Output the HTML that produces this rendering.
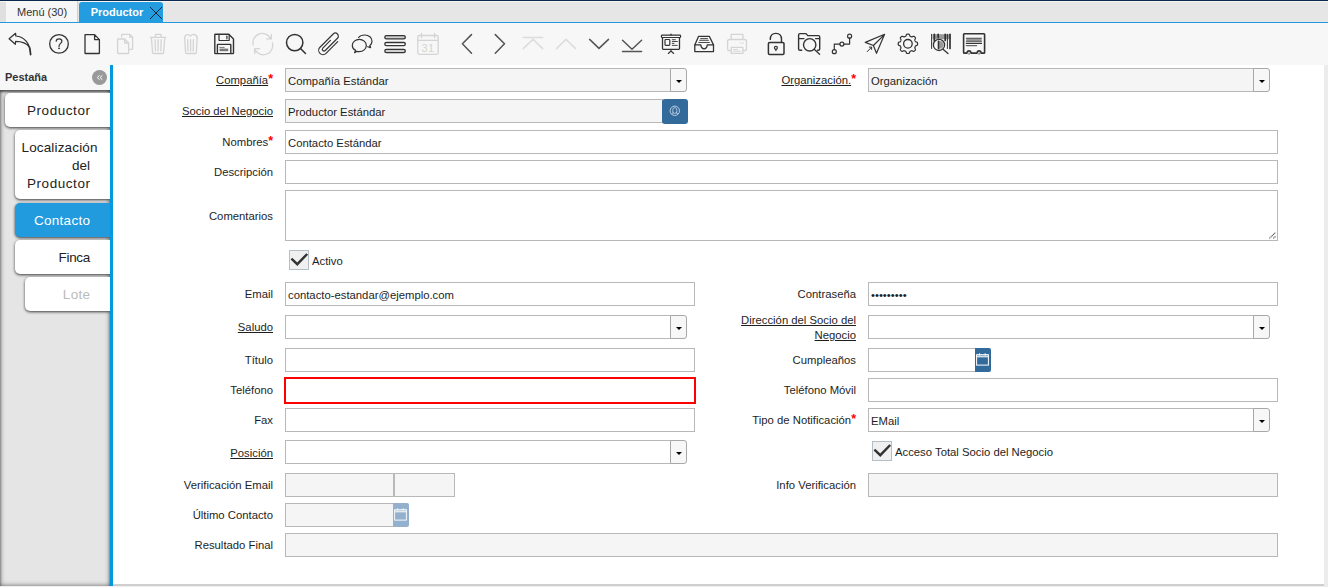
<!DOCTYPE html>
<html><head><meta charset="utf-8">
<style>
*{margin:0;padding:0;box-sizing:border-box}
html,body{width:1328px;height:587px;overflow:hidden;background:#f0f0f0;font-family:"Liberation Sans",sans-serif;color:#333}
.a{position:absolute}
#topline{left:0;top:0;width:1328px;height:1px;background:#0a2a4e}
#tabbar{left:0;top:1px;width:1328px;height:21px;background:#e6e6e6;border-top:1px solid #f4f4f4}
#menutab{left:6px;top:1px;width:72px;height:21px;background:#f6f6f6;border-right:1px solid #d0d0d0}
#menutab span{position:absolute;left:11px;top:5px;font-size:11px;color:#333;white-space:nowrap}
#prodtab{left:79px;top:2px;width:84px;height:20px;background:#249ce0;border-radius:3px 3px 0 0}
#prodtab span{position:absolute;left:11.7px;top:4px;font-size:11px;font-weight:bold;color:#fff;white-space:nowrap}
#blueline{left:0;top:22px;width:1328px;height:1px;background:#239ade}
#toolbar{left:0;top:23px;width:1328px;height:42px;background:#f7f7f7}
#lefthead{left:0;top:65px;width:110px;height:25px;background:#f7f7f7}
#lefthead span{position:absolute;left:5px;top:5.5px;font-size:11px;font-weight:bold;color:#333}
#collapse{left:92px;top:70px;width:15px;height:15px;border-radius:50%;background:#999}
#leftlist{left:0;top:90px;width:110px;height:496px;background:#e5e5e5;box-shadow:inset 0 2px 2px rgba(0,0,0,.45),inset 0 0 5px rgba(0,0,0,.6)}
#bluebar{left:110px;top:65px;width:3px;height:521px;background:#0399e0}
#content{left:113px;top:65px;width:1211px;height:519px;background:#fff}
#rightstrip{left:1324px;top:65px;width:4px;height:522px;background:#ececec}
#bottomline{left:113px;top:584px;width:1211px;height:2px;background:#cfcfcf}
.tab{position:absolute;left:15px;width:95px;height:34px;background:#fff;border-radius:5px 0 0 5px;box-shadow:0 1px 3px rgba(0,0,0,.75);font-size:13.5px;color:#222;text-align:right;padding-right:20px;line-height:36px;white-space:nowrap}
.lab{position:absolute;font-size:11.3px;color:#1e1e1e;text-align:right;white-space:nowrap;line-height:24px}
.ll{left:113px;width:160px}
.rl{left:696px;width:160px}
.u{text-decoration:underline}
.req{color:#f00;font-size:12.5px;position:relative;top:-1px;font-weight:bold}
.f{position:absolute;border:1px solid #b8b8b8;background:#fff;height:24px;font-size:11.3px;color:#1e1e1e;padding-left:2px;line-height:23px;white-space:nowrap}
.ro{background:#f5f5f5}
.dd{position:absolute;width:17px;height:24px;border:1px solid #a8a8a8;border-radius:0 3px 3px 0;background:#f7f7f7}
.dd:after{content:"";position:absolute;left:4.5px;top:10.5px;border-left:3px solid transparent;border-right:3px solid transparent;border-top:3.5px solid #000}
.cb{position:absolute;width:20px;height:20px;border:1px solid #b3bec6;background:#f0f0f0}
.cb svg{position:absolute;left:-1px;top:-1px}
.ic{position:absolute;top:23px;width:33px;height:42px}
.ic svg{position:absolute;left:0;top:0}
</style></head><body>
<div id="topline" class="a"></div>
<div id="tabbar" class="a"></div>
<div class="a" style="left:0;top:2px;width:6px;height:20px;background:#e0e0e0"></div>
<div id="menutab" class="a"><span>Menú (30)</span></div>
<div id="prodtab" class="a"><span>Productor</span>
<svg class="a" style="left:70px;top:4px" width="14" height="14" viewBox="0 0 14 14"><path d="M1 1L13 13M13 1L1 13" stroke="#0d1b2a" stroke-width="0.95" fill="none"/></svg></div>
<div id="blueline" class="a"></div>
<div id="toolbar" class="a"></div>
<svg class="a" style="left:0;top:0" width="1328" height="65" viewBox="0 0 1328 65" fill="none" stroke-linecap="round" stroke-linejoin="round">
<g stroke="#333" stroke-width="1.3">
<!-- undo -->
<path d="M30.6 54.6 C30.2 43 24 36.5 15.8 36 L15.6 33.3 L9.1 38.8 L15.3 44.3 L15.6 41.4 C21 41.4 26.5 43 29.4 47.2" stroke-width="1.25"/>
<path d="M29.4 47 C30.1 49.5 30.5 52 30.6 54.6" stroke-width="1.6"/>
<!-- help -->
<circle cx="59" cy="43.9" r="9.3"/>
<path d="M56.2 41.2 C56.2 39.6 57.4 38.9 59.1 38.9 C60.9 38.9 61.9 39.9 61.9 41.2 C61.9 43.2 59 43.8 59 46.4" stroke-width="1.2"/>
<circle cx="59" cy="48.3" r="0.6" fill="#333" stroke-width="0.6"/>
<!-- new -->
<path d="M85 34.6 H94.6 L99.4 39.6 V52.9 Q99.4 53.5 98.8 53.5 H85.6 Q85 53.5 85 52.9 V35.2 Q85 34.6 85.6 34.6 Z M94.6 34.6 V39.6 H99.4"/>
<!-- save -->
<path d="M214.8 34.8 Q214.8 34.2 215.4 34.2 H228.8 L233.5 38.9 V53 Q233.5 53.6 232.9 53.6 H215.4 Q214.8 53.6 214.8 53 Z" stroke-width="1.4"/>
<path d="M219 34.5 V39.9 Q219 40.5 219.6 40.5 H228.6 Q229.2 40.5 229.2 39.9 V34.5" stroke-width="1.2"/>
<path d="M226.9 36.2 V38.8" stroke-width="1.2"/>
<path d="M217.4 53.4 V44.9 Q217.4 44.4 217.9 44.4 H230.3 Q230.8 44.4 230.8 44.9 V53.4" stroke-width="1.4"/>
<path d="M219.8 47.4 H224.2" stroke="#666" stroke-width="0.9"/>
<rect x="219.6" y="48.6" width="8.6" height="2.6" fill="#777" stroke="none"/>
<!-- find -->
<circle cx="294.7" cy="42.6" r="8.2" stroke-width="1.5"/>
<path d="M300.5 48.5 L305.5 53.5" stroke-width="1.5"/>
<!-- attach -->
<path transform="translate(329.2 44.1) rotate(45) scale(0.86)" d="M5 -9 V10.2 A5 5 0 0 1 -5 10.2 V-11.6 A3.5 3.5 0 0 1 2 -11.6 V8.5 A2 2 0 0 1 -2 8.5 V-4" stroke-width="1.35"/>
<!-- chat -->
<path d="M355.6 50.4 C353.3 49.2 352.3 47.4 352.3 45.5 C352.3 42 355.5 39.4 359.3 39.4 C363.1 39.4 366.3 42 366.3 45.5 C366.3 49 363.1 51.6 359.3 51.6 C358.5 51.6 357.8 51.5 357.1 51.3 L354.6 52.6 Z" stroke-width="1.2"/>
<path d="M358.6 37.5 C359.8 35.9 362.2 35 364.8 35 C368.9 35 372 37.7 372 41.3 C372 43.2 371.2 44.7 369.8 45.8 L370.6 47.6 L367.7 46.7" stroke-width="1.2"/>
<!-- grid -->
<rect x="384.8" y="35.6" width="20.5" height="3.2" rx="1.6" fill="#d0d0d0"/>
<rect x="384.8" y="42.5" width="20.5" height="3.2" rx="1.6" fill="#fff"/>
<rect x="384.8" y="49.4" width="20.5" height="3.2" rx="1.6" fill="#d0d0d0"/>
<!-- chevrons -->
<path d="M471.5 34.6 L462.4 43.8 L471.5 53.2 M495.3 34.6 L504.5 43.8 L495.3 53.2" stroke="#555" stroke-width="1.5"/>
<path d="M589.6 39.4 L599 48.4 L608.5 39.4 M622.5 40.3 L632 49.3 L641.6 40.3 M622.5 51.6 H641.6" stroke="#555" stroke-width="1.5"/>
<!-- report -->
<rect x="661.4" y="35.1" width="19.2" height="2.4" rx="0.8" stroke-width="1.2"/>
<path d="M671 34.2 V35" stroke-width="1.4"/>
<path d="M662.5 37.6 V48.6 Q662.5 49.3 663.2 49.3 H678.8 Q679.5 49.3 679.5 48.6 V37.6" stroke-width="1.3"/>
<rect x="665" y="39.5" width="4.8" height="5.9" rx="0.8" stroke-width="1.2"/>
<path d="M672.3 39.7 H675.4 M672.3 41.5 H677.4 M672.3 43.4 H674 M672.3 45.4 H677.2" stroke-width="0.9"/>
<path d="M671 49.5 V51 L668.3 53.5 M671 51 L673.7 53.5" stroke-width="1.1"/>
<!-- archive -->
<path d="M694.8 44.9 L698.6 36.3 H709.3 L713.5 44.9" stroke-width="1.3"/>
<path d="M694.8 44.9 V51.6 H713.5 V44.9 H707.3 C707 47.3 705.5 48.8 704.1 48.8 C702.7 48.8 701.1 47.3 700.8 44.9 Z" stroke-width="1.3"/>
<path d="M700.6 38.6 H707.5 M699.6 40.3 H708.5 M698.8 42.5 H709.4" stroke-width="0.9"/>
<!-- lock -->
<path d="M770.3 39.4 C770.3 35.5 772.8 33.4 775.9 33.4 C779 33.4 781.5 35.5 781.5 39.4 V42.4" stroke-width="1.4"/>
<rect x="768.4" y="42.5" width="15.6" height="12" rx="1.2" stroke-width="1.5"/>
<circle cx="775.9" cy="47.8" r="1.5" stroke-width="1.2"/>
<path d="M775.9 49.3 V50.6" stroke-width="1.2"/>
<!-- zoom across -->
<path d="M801.7 50.3 H800 Q798.6 50.3 798.6 48.9 V35 Q798.6 33.6 800 33.6 H806 L807.8 35.6 H818.4 Q819.7 35.6 819.7 37 V48.9 Q819.7 50.3 818.4 50.3 H817.5" stroke-width="1.4"/>
<path d="M798.6 38.6 H804 M815.5 38.6 H819.7" stroke-width="1.2"/>
<circle cx="809.7" cy="44.8" r="6.2" stroke-width="1.4"/>
<path d="M814.2 49.3 L819.6 54.3" stroke-width="1.3"/>
<!-- workflow -->
<circle cx="834.3" cy="51.7" r="2" stroke-width="1.2"/>
<circle cx="841.9" cy="44.1" r="2" stroke-width="1.2"/>
<circle cx="849.6" cy="36.2" r="2" stroke-width="1.2"/>
<path d="M834.3 49.7 V44.1 H839.9 M843.9 44.1 H849.6 V38.2" stroke-width="1.2"/>
<!-- send -->
<path d="M884.6 34.3 L865.3 42.4 L873.4 45.5 L876.5 53.3 Z M873.4 45.5 L884.6 34.3" stroke-width="1.2"/>
<path d="M867.2 51.6 L871.6 47.2 M869.3 47.1 H871.6 V49.4" stroke-width="1"/>
<!-- gear -->
<path id="gear" d="M907.90 34.10 L908.15 34.11 L908.41 34.12 L908.66 34.16 L908.91 34.23 L909.14 34.35 L909.36 34.59 L909.53 34.98 L909.67 35.46 L909.81 35.85 L909.96 36.10 L910.14 36.25 L910.32 36.35 L910.51 36.44 L910.70 36.52 L910.88 36.59 L911.07 36.67 L911.26 36.75 L911.45 36.82 L911.66 36.88 L911.89 36.90 L912.17 36.83 L912.55 36.65 L912.98 36.41 L913.38 36.26 L913.70 36.24 L913.96 36.32 L914.18 36.45 L914.38 36.60 L914.58 36.77 L914.76 36.94 L914.93 37.12 L915.10 37.32 L915.25 37.52 L915.38 37.74 L915.46 38.00 L915.44 38.32 L915.29 38.72 L915.05 39.15 L914.87 39.53 L914.80 39.81 L914.82 40.04 L914.88 40.25 L914.95 40.44 L915.03 40.63 L915.11 40.82 L915.18 41.00 L915.26 41.19 L915.35 41.38 L915.45 41.56 L915.60 41.74 L915.85 41.89 L916.24 42.03 L916.72 42.17 L917.11 42.34 L917.35 42.56 L917.47 42.79 L917.54 43.04 L917.58 43.29 L917.59 43.55 L917.60 43.80 L917.59 44.05 L917.58 44.31 L917.54 44.56 L917.47 44.81 L917.35 45.04 L917.11 45.26 L916.72 45.43 L916.24 45.57 L915.85 45.71 L915.60 45.86 L915.45 46.04 L915.35 46.22 L915.26 46.41 L915.18 46.60 L915.11 46.78 L915.03 46.97 L914.95 47.16 L914.88 47.35 L914.82 47.56 L914.80 47.79 L914.87 48.07 L915.05 48.45 L915.29 48.88 L915.44 49.28 L915.46 49.60 L915.38 49.86 L915.25 50.08 L915.10 50.28 L914.93 50.48 L914.76 50.66 L914.58 50.83 L914.38 51.00 L914.18 51.15 L913.96 51.28 L913.70 51.36 L913.38 51.34 L912.98 51.19 L912.55 50.95 L912.17 50.77 L911.89 50.70 L911.66 50.72 L911.45 50.78 L911.26 50.85 L911.07 50.93 L910.88 51.01 L910.70 51.08 L910.51 51.16 L910.32 51.25 L910.14 51.35 L909.96 51.50 L909.81 51.75 L909.67 52.14 L909.53 52.62 L909.36 53.01 L909.14 53.25 L908.91 53.37 L908.66 53.44 L908.41 53.48 L908.15 53.49 L907.90 53.50 L907.65 53.49 L907.39 53.48 L907.14 53.44 L906.89 53.37 L906.66 53.25 L906.44 53.01 L906.27 52.62 L906.13 52.14 L905.99 51.75 L905.84 51.50 L905.66 51.35 L905.48 51.25 L905.29 51.16 L905.10 51.08 L904.92 51.01 L904.73 50.93 L904.54 50.85 L904.35 50.78 L904.14 50.72 L903.91 50.70 L903.63 50.77 L903.25 50.95 L902.82 51.19 L902.42 51.34 L902.10 51.36 L901.84 51.28 L901.62 51.15 L901.42 51.00 L901.22 50.83 L901.04 50.66 L900.87 50.48 L900.70 50.28 L900.55 50.08 L900.42 49.86 L900.34 49.60 L900.36 49.28 L900.51 48.88 L900.75 48.45 L900.93 48.07 L901.00 47.79 L900.98 47.56 L900.92 47.35 L900.85 47.16 L900.77 46.97 L900.69 46.78 L900.62 46.60 L900.54 46.41 L900.45 46.22 L900.35 46.04 L900.20 45.86 L899.95 45.71 L899.56 45.57 L899.08 45.43 L898.69 45.26 L898.45 45.04 L898.33 44.81 L898.26 44.56 L898.22 44.31 L898.21 44.05 L898.20 43.80 L898.21 43.55 L898.22 43.29 L898.26 43.04 L898.33 42.79 L898.45 42.56 L898.69 42.34 L899.08 42.17 L899.56 42.03 L899.95 41.89 L900.20 41.74 L900.35 41.56 L900.45 41.38 L900.54 41.19 L900.62 41.00 L900.69 40.82 L900.77 40.63 L900.85 40.44 L900.92 40.25 L900.98 40.04 L901.00 39.81 L900.93 39.53 L900.75 39.15 L900.51 38.72 L900.36 38.32 L900.34 38.00 L900.42 37.74 L900.55 37.52 L900.70 37.32 L900.87 37.12 L901.04 36.94 L901.22 36.77 L901.42 36.60 L901.62 36.45 L901.84 36.32 L902.10 36.24 L902.42 36.26 L902.82 36.41 L903.25 36.65 L903.63 36.83 L903.91 36.90 L904.14 36.88 L904.35 36.82 L904.54 36.75 L904.73 36.67 L904.92 36.59 L905.10 36.52 L905.29 36.44 L905.48 36.35 L905.66 36.25 L905.84 36.10 L905.99 35.85 L906.13 35.46 L906.27 34.98 L906.44 34.59 L906.66 34.35 L906.89 34.23 L907.14 34.16 L907.39 34.12 L907.65 34.11 L907.90 34.10 Z" stroke-width="1.2"/>
<circle cx="907.9" cy="43.8" r="4.3" stroke-width="1.3"/>
<!-- barcode -->
<rect x="932.6" y="34.2" width="18" height="5" fill="#999" stroke="none"/>
<path d="M931.6 34.3 V48.5 M947.4 34.3 V48.5" stroke-width="1"/>
<path d="M934.3 34.3 V41 M938.2 34.3 V37.5 M945.2 34.3 V40.5 M950 34.3 V48.5" stroke-width="1.7"/>
<circle cx="939" cy="44.9" r="5.6" fill="#f7f7f7" stroke-width="1.3"/>
<path d="M939.5 41.3 H942.2 L943.8 44.9 L942.2 48.5 H939.5 Z" fill="#999" stroke="none"/>
<path d="M938.6 41.4 V48.4" stroke-width="1.8"/>
<path d="M943 49.3 L948 53.5" stroke-width="1.3"/>
<!-- receipt -->
<path d="M963.6 52.4 V34.4 Q963.6 33.7 964.3 33.7 H983.9 Q984.6 33.7 984.6 34.4 V52.4 Q984.6 53.1 983.9 53.1 H981.2 C981 51.3 980.2 50.9 979.1 50.9 C978 50.9 977.2 51.3 977 53.1 H971.1 C970.9 51.3 970.1 50.9 969 50.9 C967.9 50.9 967.1 51.3 966.9 53.1 H964.3 Q963.6 53.1 963.6 52.4 Z" stroke-width="1.6"/>
<circle cx="969" cy="53.6" r="0.9" stroke="#888" stroke-width="0.8"/>
<circle cx="979.1" cy="53.6" r="0.9" stroke="#888" stroke-width="0.8"/>
<rect x="966.3" y="37.8" width="15.3" height="4" fill="#999" stroke="none"/>
<path d="M966.3 38.3 H981.5 M966.3 41.3 H981.5" stroke="#555" stroke-width="0.9"/>
<path d="M966.3 43.4 H981.5" stroke-width="1.1"/>
<path d="M966.3 45.6 H976.7" stroke="#666" stroke-width="1.2"/>
</g>
<g stroke="#d4d4d4" stroke-width="1.3">
<!-- copy -->
<path d="M121.6 37 V35 Q121.6 34.4 122.2 34.4 H129.8 L132.6 37.2 V48.7 Q132.6 49.3 132 49.3 H129"/>
<path d="M129.8 34.4 V37.2 H132.6"/>
<path d="M117.6 39.6 Q117.6 39 118.2 39 H124.6 L128.6 43 V53 Q128.6 53.5 128 53.5 H118.2 Q117.6 53.5 117.6 53 Z M124.6 39 V43 H128.6"/>
<!-- trash -->
<path d="M150.3 37.4 H165.8"/>
<path d="M155.3 37.4 V34.9 Q155.3 34.3 155.9 34.3 H160.5 Q161.1 34.3 161.1 34.9 V37.4"/>
<path d="M151.4 37.6 L152.6 52.9 Q152.7 53.5 153.3 53.5 H162.9 Q163.5 53.5 163.6 52.9 L164.8 37.6"/>
<path d="M155.1 39.6 L155.4 50.9 M158.1 39.6 V50.9 M161.2 39.6 L160.9 50.9"/>
<!-- delete selected -->
<path d="M184.6 37.4 L185.6 52.9 Q185.7 53.5 186.3 53.5 H195.6 Q196.2 53.5 196.3 52.9 L197.2 37.4"/>
<path d="M184.6 37.4 C185.2 35.5 186.5 34.3 188 34.6 C189.2 34.8 190 35.8 190.6 36 C191.2 35.2 192 34.3 193.6 34.3 C195.4 34.4 196.8 35.5 197.2 37.4"/>
<path d="M187.7 39.6 L187.9 51 M190.6 39.6 V51 M193.4 39.6 L193.2 51"/>
<!-- refresh -->
<path d="M253.2 45 A9.4 9.4 0 0 1 270.3 37.8 M271.4 34.4 V38.9 H266.7"/>
<path d="M272.5 43 A9.4 9.4 0 0 1 255.4 50.3 M254.7 53.5 V48.7 H259.4"/>
<!-- calendar -->
<rect x="417.8" y="35.5" width="20.4" height="18.8" rx="1.5"/>
<path d="M417.8 40.4 H438.2 M421.5 33.4 V37.8 M434.6 33.4 V37.8"/>
<!-- first / up -->
<path d="M523.3 37.4 H542.7 M523.3 48.6 L533 39.3 L542.7 48.6 M556.5 48.6 L566 39.3 L575.6 48.6" stroke="#dcdcdc" stroke-width="1.5"/>
<!-- print -->
<path d="M731.2 39.4 V34.4 H742.9 V39.4"/>
<path d="M731.2 50.6 H729.5 Q727.6 50.6 727.6 48.7 V41.4 Q727.6 39.5 729.5 39.5 H744.6 Q746.5 39.5 746.5 41.4 V48.7 Q746.5 50.6 744.6 50.6 H742.9"/>
<path d="M731.2 47.3 H742.9 V53.4 H731.2 Z"/>
<path d="M733.5 49.5 H737.5 M733.5 51.2 H740.5" stroke-width="0.9"/>
<path d="M740.3 43 H741 M742.7 43 H743.4" stroke-width="1.2"/>
</g>
<text x="428" y="51.6" font-family="Liberation Sans" font-size="11" fill="#d4d4d4" text-anchor="middle" letter-spacing="0.5">31</text>
</svg>


<div id="lefthead" class="a"><span>Pestaña</span></div>
<div id="collapse" class="a"><svg class="a" style="left:0;top:0" width="15" height="15" viewBox="0 0 15 15"><path d="M7.6 5.3L5.2 7.5L7.6 9.7M10.4 5.3L8 7.5L10.4 9.7" stroke="#fff" stroke-width="1" fill="none"/></svg></div>
<div id="leftlist" class="a"></div>
<div class="tab" style="left:5px;top:93px;width:105px;letter-spacing:0.55px;padding-right:19.5px">Productor</div>
<div class="tab" style="top:130px;height:69px;line-height:18.1px;padding-top:8.5px;padding-right:20px"><span style="position:absolute;left:6.5px;top:8.5px;letter-spacing:0.15px">Localización</span><br>del<br><span style="letter-spacing:0.55px;margin-right:-0.5px">Productor</span></div>
<div class="tab" style="top:203px;background:#229ade;color:#fff;letter-spacing:0.3px;padding-right:19.7px">Contacto</div>
<div class="tab" style="top:240px;letter-spacing:-0.3px;padding-right:20px">Finca</div>
<div class="tab" style="left:25px;top:277px;width:85px;color:#bbb;letter-spacing:0.3px;padding-right:19.7px">Lote</div>
<div id="bluebar" class="a"></div>
<div id="content" class="a"></div>
<div id="rightstrip" class="a"></div>
<div id="bottomline" class="a"></div>

<!-- FORM -->
<div class="lab ll" style="top:68px"><span class="u">Compañía</span><span class="req">*</span></div>
<div class="f ro" style="left:285px;top:68px;width:386px;line-height:25px">Compañía Estándar</div>
<div class="dd" style="left:670px;top:68px"></div>
<div class="lab rl" style="top:68px"><span class="u">Organización.</span><span class="req">*</span></div>
<div class="f ro" style="left:868px;top:68px;width:386px;line-height:25px">Organización</div>
<div class="dd" style="left:1253px;top:68px"></div>

<div class="lab ll" style="top:99px"><span class="u">Socio del Negocio</span></div>
<div class="f ro" style="left:285px;top:99px;width:378px;line-height:25px">Productor Estándar</div>
<div class="a" style="left:662px;top:99px;width:26px;height:25px;background:#336a9c;border-radius:3px"><svg class="a" style="left:0;top:0" width="26" height="25" viewBox="0 0 26 25" fill="none" stroke="#c5d6e6" stroke-width="0.9"><circle cx="12.8" cy="11.8" r="4.7"/><path d="M11.2 14.2 C10.6 12.6 10.6 10.4 11.3 9.3 C12 8.4 13.6 8.4 14.3 9.3 C15 10.4 15 12.6 14.4 14.2 M9.6 15 C10.6 13.9 11.6 13.6 12.8 14.5 C14 13.6 15 13.9 16 15"/></svg></div>

<div class="lab ll" style="top:130px">Nombres<span class="req">*</span></div>
<div class="f" style="left:285px;top:130px;width:993px;line-height:25px">Contacto Estándar</div>
<div class="lab ll" style="top:160px">Descripción</div>
<div class="f" style="left:285px;top:160px;width:993px"></div>
<div class="lab ll" style="top:204px">Comentarios</div>
<div class="f" style="left:285px;top:190px;width:993px;height:51px"></div>
<svg class="a" style="left:1260px;top:224px" width="24" height="22" viewBox="0 0 24 22"><path d="M9.4 14.4 L15.6 8.4 M13.3 14.4 L15.6 12.4" stroke="#555" stroke-width="1.1" stroke-dasharray="1.2 0.5" fill="none"/></svg>

<div class="cb" style="left:289px;top:250px"><svg width="20" height="20" viewBox="0 0 20 20"><path d="M2.4 8.6 L8.3 14.2 L18.2 4" stroke="#333" stroke-width="2.4" fill="none" stroke-linejoin="miter"/></svg></div>
<div class="lab" style="left:312px;top:249px;text-align:left">Activo</div>

<div class="lab ll" style="top:282px">Email</div>
<div class="f" style="left:285px;top:282px;width:410px;line-height:25px">contacto-estandar@ejemplo.com</div>
<div class="lab rl" style="top:282px">Contraseña</div>
<div class="f" style="left:868px;top:282px;width:410px;line-height:25px">•••••••••</div>

<div class="lab ll" style="top:315px"><span class="u">Saludo</span></div>
<div class="f" style="left:285px;top:315px;width:386px"></div>
<div class="dd" style="left:670px;top:315px"></div>
<div class="lab rl" style="top:313px;line-height:15px"><span class="u">Dirección del Socio del</span><br><span class="u">Negocio</span></div>
<div class="f" style="left:868px;top:315px;width:386px"></div>
<div class="dd" style="left:1253px;top:315px"></div>

<div class="lab ll" style="top:348px">Título</div>
<div class="f" style="left:285px;top:348px;width:410px"></div>
<div class="lab rl" style="top:348px">Cumpleaños</div>
<div class="f" style="left:868px;top:348px;width:108px"></div>
<div class="a" style="left:975px;top:348px;width:16px;height:24px;background:#336a9c;border-radius:0 2px 2px 0"><svg class="a" style="left:0;top:0" width="16" height="24" viewBox="0 0 16 24" fill="none" stroke="#fff" stroke-width="1"><rect x="1.6" y="6.7" width="11.8" height="10.4"/><path d="M1.6 8.8 H13.4 M4.6 5.3 V7.5 M10.2 5.3 V7.5" /><rect x="1.6" y="6.7" width="11.8" height="2.1" fill="#fff" fill-opacity="0.35" stroke="none"/></svg></div>

<div class="lab ll" style="top:378px">Teléfono</div>
<div class="f" style="left:284px;top:377px;width:412px;height:27px;border:2px solid #f00"></div>
<div class="lab rl" style="top:378px">Teléfono Móvil</div>
<div class="f" style="left:868px;top:378px;width:410px"></div>

<div class="lab ll" style="top:408px">Fax</div>
<div class="f" style="left:285px;top:408px;width:410px"></div>
<div class="lab rl" style="top:408px">Tipo de Notificación<span class="req">*</span></div>
<div class="f" style="left:868px;top:408px;width:386px;line-height:25px">EMail</div>
<div class="dd" style="left:1253px;top:408px"></div>

<div class="lab ll" style="top:441px"><span class="u">Posición</span></div>
<div class="f" style="left:285px;top:440px;width:386px"></div>
<div class="dd" style="left:670px;top:440px"></div>
<div class="cb" style="left:872px;top:441px"><svg width="20" height="20" viewBox="0 0 20 20"><path d="M2.4 8.6 L8.3 14.2 L18.2 4" stroke="#333" stroke-width="2.4" fill="none" stroke-linejoin="miter"/></svg></div>
<div class="lab" style="left:895px;top:440px;text-align:left">Acceso Total Socio del Negocio</div>

<div class="lab ll" style="top:473px">Verificación Email</div>
<div class="f ro" style="left:285px;top:473px;width:109px"></div>
<div class="f ro" style="left:394px;top:473px;width:61px"></div>
<div class="lab rl" style="top:473px">Info Verificación</div>
<div class="f ro" style="left:868px;top:473px;width:410px"></div>

<div class="lab ll" style="top:503px">Último Contacto</div>
<div class="f ro" style="left:285px;top:503px;width:109px"></div>
<div class="a" style="left:393px;top:503px;width:16px;height:24px;background:#93b1cc;border-radius:0 2px 2px 0"><svg class="a" style="left:0;top:0" width="16" height="24" viewBox="0 0 16 24" fill="none" stroke="#f4f8fb" stroke-width="1"><rect x="1.6" y="6.7" width="11.8" height="10.4"/><path d="M1.6 8.8 H13.4 M4.6 5.3 V7.5 M10.2 5.3 V7.5" /><rect x="1.6" y="6.7" width="11.8" height="2.1" fill="#f4f8fb" fill-opacity="0.35" stroke="none"/></svg></div>

<div class="lab ll" style="top:533px">Resultado Final</div>
<div class="f ro" style="left:285px;top:533px;width:993px"></div>

</body></html>
